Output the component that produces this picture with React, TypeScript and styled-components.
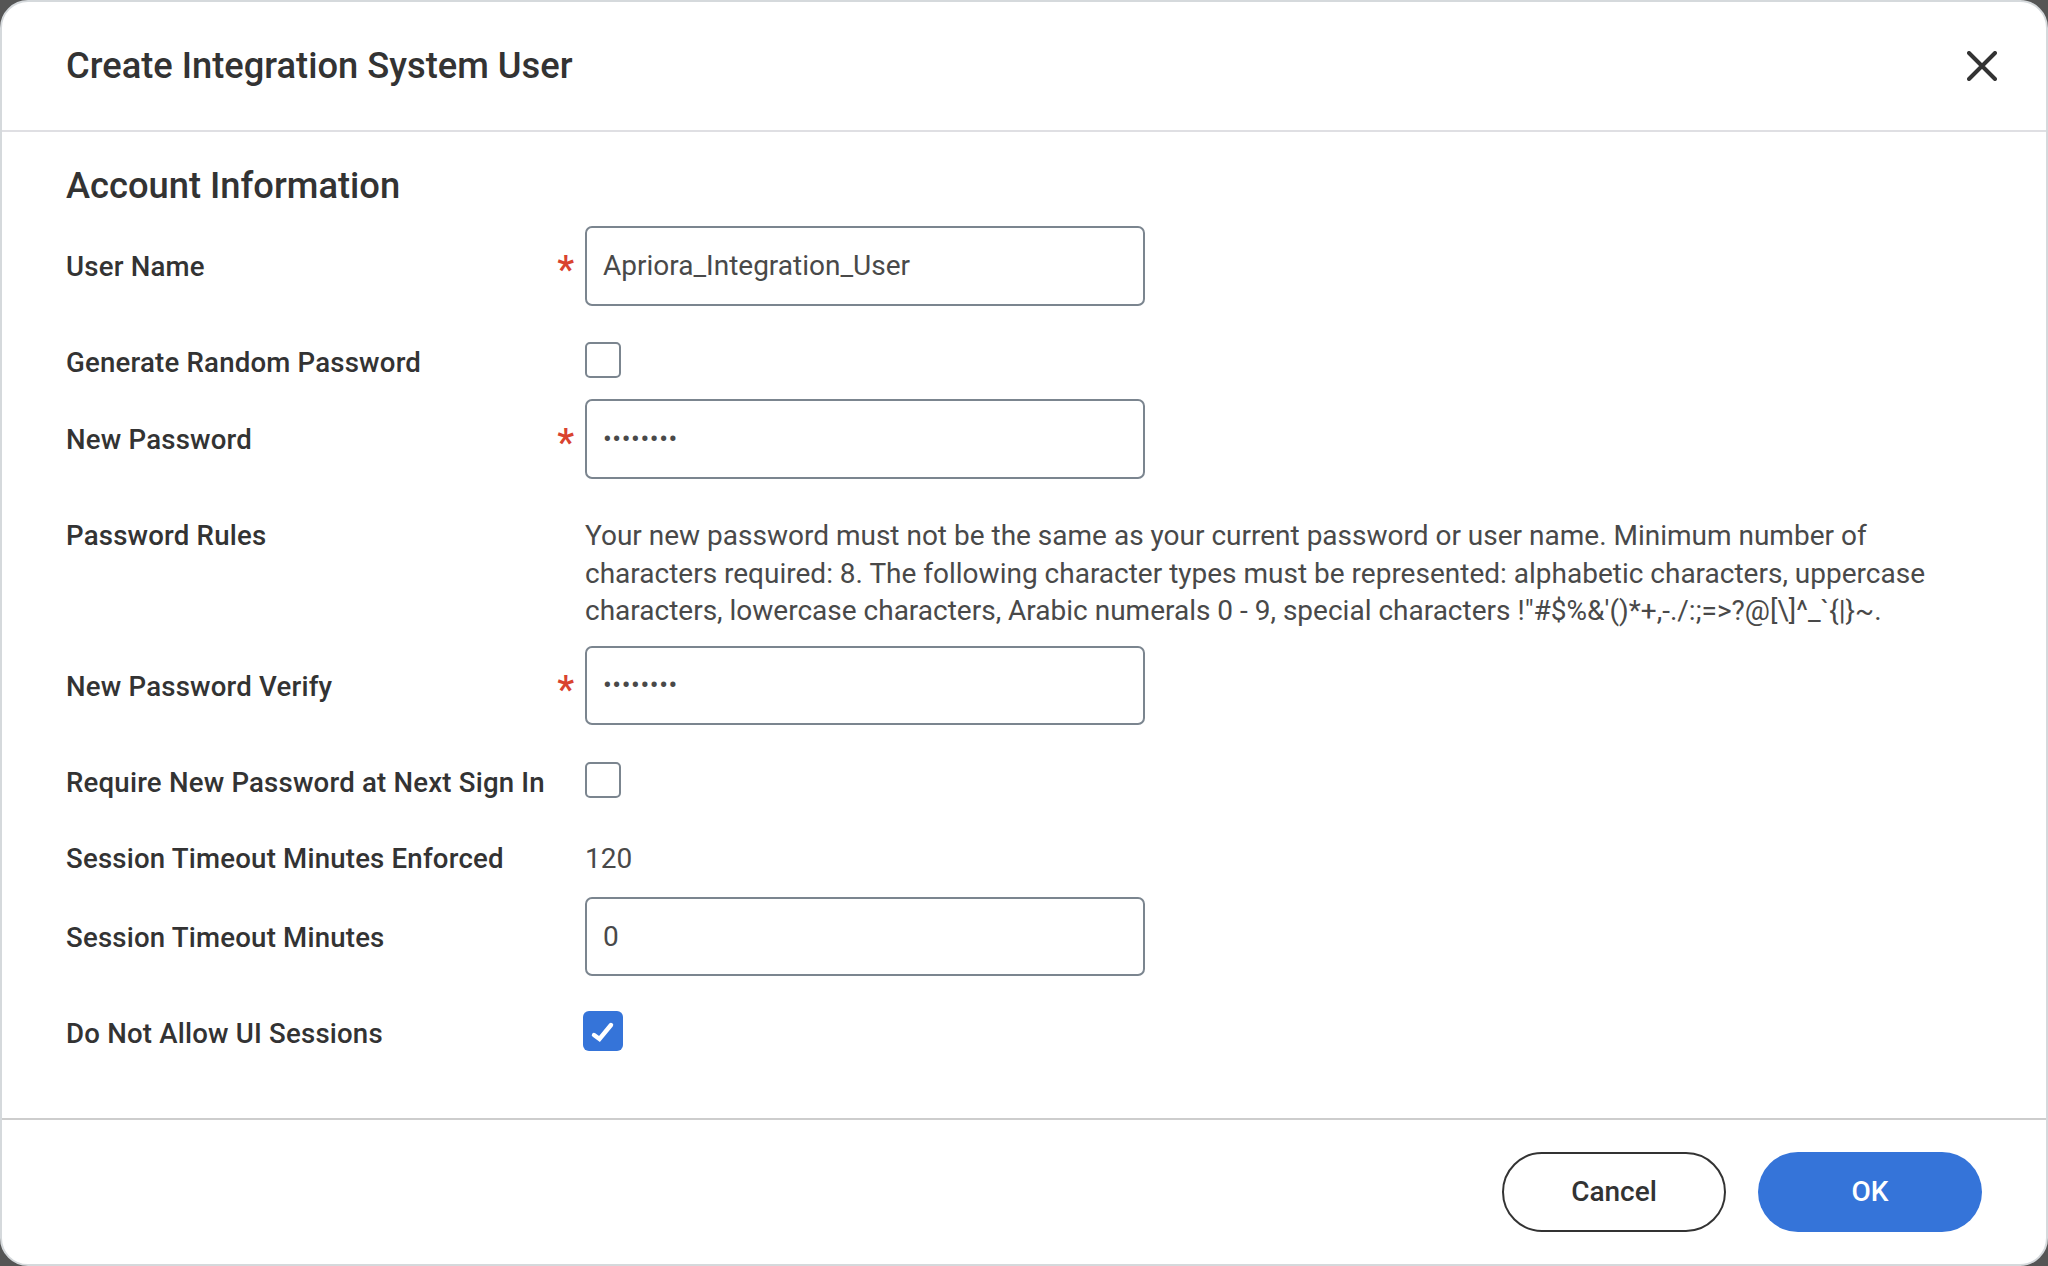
import React from "react";
import styled, { createGlobalStyle } from "styled-components";

const Global = createGlobalStyle`
  html, body { margin: 0; padding: 0; height: 100%; background: #555555; }
  * { box-sizing: border-box; }
  body { font-family: Roboto, "Liberation Sans", sans-serif; -webkit-font-smoothing: antialiased; }
`;

const Dialog = styled.div`
  width: 2048px; height: 1266px; display: flex; flex-direction: column;
  background: #ffffff; border: 2px solid #d5d9dc; border-radius: 28px; overflow: hidden; color: #333333;
`;
const Header = styled.header`
  flex: none; height: 130px; display: flex; align-items: center; justify-content: space-between;
  padding: 0 49px 0 64px; border-bottom: 2px solid #dfdfe3;
`;
const Title = styled.h1`
  margin: 0; font-size: 36.3px; font-weight: 500; line-height: 40px;
`;
const CloseButton = styled.button`
  border: 0; background: none; padding: 0; width: 30px; height: 30px; display: block; color: #333333;
  svg { display: block; }
`;
const Body = styled.main`
  flex: 1; padding: 34px 0 0 64px; display: flex; flex-direction: column;
`;
const SectionTitle = styled.h2`
  margin: 0 0 20px; font-size: 36.3px; font-weight: 500; line-height: 40px;
`;
const Row = styled.div<{ $gap?: number; $height?: number }>`
  display: flex; align-items: center; margin-top: ${p => p.$gap ?? 0}px;
  height: ${p => (p.$height ? `${p.$height}px` : "auto")};
`;
const TopRow = styled(Row)`
  align-items: flex-start;
`;
const LabelCell = styled.div<{ $shift?: number }>`
  flex: none; width: 519px; display: flex; align-items: center; justify-content: space-between;
  padding: ${p => p.$shift ?? 2}px 11px 0 0;
`;
const Label = styled.label`
  font-size: 27.6px; font-weight: 500; line-height: 37.5px; letter-spacing: 0.2px; white-space: nowrap;
`;
const Required = styled.span`
  color: #d9432f; font-size: 38px; font-weight: 500; line-height: 37.5px; height: 37.5px; margin-top: 8px;
`;
const Field = styled.div`
  width: 560px; height: 79.5px; padding: 0 16px; display: flex; align-items: center;
  border: 2px solid #7b858f; border-radius: 7px; font-size: 28px; color: #494949;
`;
const Dots = styled.span`
  font-size: 26px; letter-spacing: 0.6px; line-height: 1;
`;
const Check = styled.div`
  width: 36px; height: 36px; border: 2px solid #7b858f; border-radius: 5px; background: #fff;
`;
const CheckOn = styled.div`
  width: 40px; height: 40px; margin-left: -2px; border-radius: 6px; background: #3574d9;
  svg { display: block; }
`;
const RuleText = styled.p`
  margin: 1px 0 0; width: 1360px; font-size: 28px; line-height: 37.5px; color: #494949;
`;
const Value = styled.span`
  font-size: 28px; line-height: 37.5px; color: #494949;
`;
const Footer = styled.footer`
  flex: none; height: 146px; padding: 32px 64px 0 0; display: flex; justify-content: flex-end; gap: 32px;
  border-top: 2px solid #cdcdcd;
`;
const Button = styled.button<{ $primary?: boolean }>`
  width: 224px; height: 80px; border-radius: 40px; padding: 0 0 2px;
  font: 500 28px Roboto, sans-serif;
  color: ${p => (p.$primary ? "#ffffff" : "#333333")};
  background: ${p => (p.$primary ? "#3574d9" : "#ffffff")};
  border: ${p => (p.$primary ? "0" : "2px solid #333333")};
`;

const Req = () => <Required>*</Required>;

export default function App() {
  return (
    <>
      <Global />
      <Dialog>
        <Header>
          <Title>Create Integration System User</Title>
          <CloseButton aria-label="Close">
            <svg width="30" height="30" viewBox="0 0 30 30" fill="none">
              <path d="M2 2L28 28M28 2L2 28" stroke="currentColor" strokeWidth="4" strokeLinecap="round" />
            </svg>
          </CloseButton>
        </Header>
        <Body>
          <SectionTitle>Account Information</SectionTitle>
          <Row>
            <LabelCell><Label>User Name</Label><Req /></LabelCell>
            <Field>Apriora_Integration_User</Field>
          </Row>
          <Row $gap={36.5} $height={36}>
            <LabelCell $shift={5}><Label>Generate Random Password</Label></LabelCell>
            <Check />
          </Row>
          <Row $gap={21}>
            <LabelCell><Label>New Password</Label><Req /></LabelCell>
            <Field><Dots>••••••••</Dots></Field>
          </Row>
          <TopRow $gap={37.5}>
            <LabelCell $shift={1}><Label>Password Rules</Label></LabelCell>
            <RuleText>
              Your new password must not be the same as your current password or user name. Minimum number of characters required: 8. The following character types must be represented: alphabetic characters, uppercase characters, lowercase characters, Arabic numerals 0 - 9, special characters !"#$%&'()*+,-./:;=&gt;?@[\]^_`{"{"}|{"}"}~.
            </RuleText>
          </TopRow>
          <Row $gap={16}>
            <LabelCell><Label>New Password Verify</Label><Req /></LabelCell>
            <Field><Dots>••••••••</Dots></Field>
          </Row>
          <Row $gap={36.5} $height={36}>
            <LabelCell $shift={6}><Label>Require New Password at Next Sign In</Label></LabelCell>
            <Check />
          </Row>
          <Row $gap={42.5}>
            <LabelCell $shift={0}><Label>Session Timeout Minutes Enforced</Label></LabelCell>
            <Value>120</Value>
          </Row>
          <Row $gap={19}>
            <LabelCell><Label>Session Timeout Minutes</Label></LabelCell>
            <Field>0</Field>
          </Row>
          <Row $gap={34.5} $height={40}>
            <LabelCell $shift={6}><Label>Do Not Allow UI Sessions</Label></LabelCell>
            <CheckOn>
              <svg width="40" height="40" viewBox="0 0 40 40" fill="none">
                <path d="M11 24L16.5 28L28 14" stroke="#ffffff" strokeWidth="4.4" strokeLinecap="round" strokeLinejoin="miter" />
              </svg>
            </CheckOn>
          </Row>
        </Body>
        <Footer>
          <Button>Cancel</Button>
          <Button $primary>OK</Button>
        </Footer>
      </Dialog>
    </>
  );
}
